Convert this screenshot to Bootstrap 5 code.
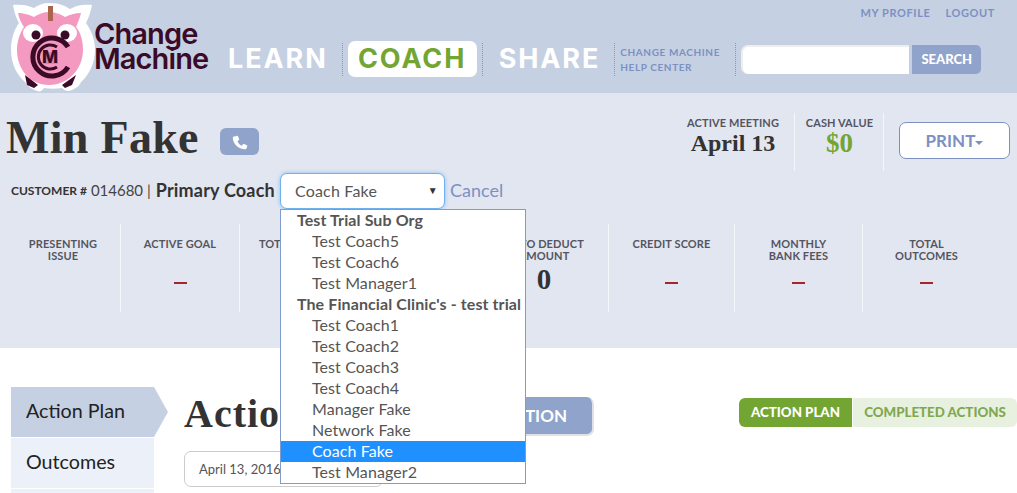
<!DOCTYPE html>
<html lang="en"><head><meta charset="utf-8"><title>Change Machine</title>
<link rel="stylesheet" href="https://cdn.jsdelivr.net/npm/bootstrap@5.3.0/dist/css/bootstrap.min.css">
<style>
html,body{height:493px;overflow:hidden}
body{font-family:"Lato","Liberation Sans",sans-serif;background:#fff;color:#3a3a3a}
.top-bar{background:#c5d0e3;height:93px;position:relative}
.logo-svg{width:100px;height:93px;margin-left:5px;flex:none;overflow:visible}
.logo-word{font-family:"Inter",sans-serif;font-weight:600;color:#3b0a26;font-size:29px;line-height:25px;letter-spacing:-.9px;margin-left:-11px;margin-top:21px;width:120px;flex:none}
.main-nav{margin-top:41px;height:36px;margin-left:14px}
.nav-word{font-family:"Inter",sans-serif;font-weight:700;font-size:27px;letter-spacing:1.9px;line-height:36px;color:#fff;text-decoration:none;display:block}
.nav-coach{background:#fff;color:#73a533;border-radius:7px;width:129px;text-align:center;margin:0 5px}
.dot-sep{border-left:1px dotted #8a97b8;height:33px;margin-top:2px}
.sep-wide{margin-left:14px}
.help-links{font-size:10px;font-weight:700;letter-spacing:.6px;line-height:15px;color:#7c90c2;padding:4px 0 0 5px;width:120px;white-space:nowrap}
.top-link{font-size:11px;font-weight:700;letter-spacing:.6px;color:#7c90c2;text-decoration:none}
.top-links{position:absolute;right:22px;top:5px;gap:15px}
.search-box{width:168px;height:29px;background:#fff;border:0;border-top:2px solid #eee;border-left:2px solid #eee;border-radius:7px 0 0 7px;margin:4px 3px 0 5px}
.search-btn{background:#8fa3cb;color:#fff;border:0;font-size:13px;font-weight:900;height:29px;width:69px;padding:0;border-radius:0 5px 5px 0;margin-top:4px}
.info-panel{background:#e2e6f1;height:255px}
.person-name{font-family:"Liberation Serif",serif;font-weight:700;font-size:46px;line-height:48px;color:#333;margin:0;letter-spacing:.3px}
.name-wrap{padding:21px 0 0 6px}
.phone-btn{width:39px;height:27px;background:#8fa3cb;border-radius:6px;margin-left:21px;margin-top:14px;border:0;padding:0}
.mini-label{font-size:11px;font-weight:700;color:#55555f;line-height:12px;letter-spacing:.1px}
.meet-val{font-family:"Liberation Serif",serif;font-weight:700;font-size:24px;line-height:28px;color:#333}
.cash-val{color:#73a533;font-size:27px}
.meet-group{padding:20px 7px 0 0}
.meet-col{text-align:center;height:58px;padding:4px 15px 0 0}
.meet-col.cash-col{border-left:1px solid #f4f6fa;border-right:1px solid #f4f6fa;padding:4px 9px 0 10px;width:90px}
.print-btn{width:111px;height:37px;background:#fff;border:1px solid #7c90c2;border-radius:7px;color:#7c90c2;font-weight:700;font-size:17px;margin:9px 0 0 15px;padding:0;line-height:33px}
.caret-mark{display:inline-block;border:4px solid transparent;border-top-color:#7c90c2;border-bottom:0;vertical-align:middle}
.cust-row{padding-left:11px;height:37px;margin-top:1px}
.cust-tag{font-size:12px;font-weight:700;color:#333}
.cust-num{font-size:15px;color:#444;margin-left:4px}
.coach-lab{font-size:18px;letter-spacing:.2px;font-weight:700;color:#333;margin-left:5px;margin-right:5px}
.coach-pick{width:165px;height:36px;background:#fff;border:1px solid #6fb1ef;border-radius:7px;box-shadow:0 0 4px #8ac0f2;padding:0 6px 0 14px;font-size:16px;letter-spacing:.2px;color:#555;position:relative}
.pick-tri{font-size:10px;color:#333}
.cancel-lnk{font-size:18px;color:#7c90c2;text-decoration:none;margin-left:5px}
.pick-list{position:absolute;left:-1px;top:35px;width:246px;background:#fff;border:1px solid #7f9ccc;margin:0;padding:0;list-style:none;z-index:5;font-size:16px;line-height:19px;letter-spacing:.1px;color:#555;white-space:nowrap}
.pick-list li{padding-left:31px;height:21px}
.pick-list li.grp{padding-left:16px;font-weight:700}
.pick-list li.sel{background:#1e90ff;color:#fff}
.stat-row{margin-top:15px;height:88px}
.stat-cell{border-left:1px solid #f4f6fa;text-align:center;padding-top:14px;flex:none}
.stat-cell:first-child{border-left:0;padding-left:6px}
.stat-cell.nudge{padding-right:1px}
.stat-dash{width:13px;height:2px;background:#a4262c;margin:20px auto 0}
.stat-dash.two{margin-top:32px}
.stat-zero{font-family:"Liberation Serif",serif;font-weight:700;font-size:29px;line-height:29px;color:#333;margin-top:3px}
.lower{position:relative;height:145px}
.side-col{margin-left:11px;margin-top:39px;width:143px;flex:none}
.side-item{height:50px;line-height:48px;padding-left:15px;background:#ecf0f8;color:#222;font-size:19.7px;margin-bottom:1px;position:relative}
.side-item.on{background:#c5d0e3}
.side-item.on::after{content:"";position:absolute;left:100%;top:0;border-left:14px solid #c5d0e3;border-top:25px solid transparent;border-bottom:25px solid transparent}
.side-item.stub{height:4px;margin:0}
.main-col{margin-left:30px;margin-top:44px;width:410px;flex:none}
.plan-title{font-family:"Liberation Serif",serif;font-weight:700;font-size:40px;line-height:44px;color:#333;margin:0;letter-spacing:1px;white-space:nowrap}
.add-btn{position:absolute;left:430px;top:49px;width:164px;height:39px;background:#8fa3cb;color:#fff;border:0;border-right:2px solid #dfe1e6;border-bottom:2px solid #dfe1e6;border-radius:7px;font-weight:700;font-size:17px;padding:0 25px 0 0;text-align:right}
.date-box{width:199px;height:36px;border:1px solid #ccc;border-radius:7px;margin-top:15px;padding:0 14px;line-height:34px;font-size:13px;color:#555}
.tab-set{position:absolute;left:739px;top:50px;height:29px;font-size:13.3px;font-weight:900;line-height:29px}
.tab-on{background:#73a533;color:#fff;width:113px;text-align:center;border-radius:6px 0 0 6px;margin-right:1px}
.tab-off{background:#e8f1e0;color:#7fa850;width:164px;text-align:center;border-radius:0 6px 6px 0}
</style></head><body>
<header class="top-bar d-flex">
<svg class="logo-svg" viewBox="5 0 100 93" role="img" aria-label="Change Machine piggy bank logo">
<path d="M49 3c-6 0-11 2-15 5-6-3-14-4-21-3 1 6 3 13 6 18-5 7-8 16-8 27 0 14 6 25 14 32 2 4 6 7 12 9 3 1 5 0 7-3 6 1 12 1 18 0 3 3 6 4 10 2 5-2 8-5 9-8 8-7 14-19 14-32 0-11-4-20-9-27 3-6 5-12 6-18-8-1-16 0-22 4-5-3-10-6-21-6z" fill="#fff"/>
<path d="M18 13c5 0 12 2 16 4 4-3 10-5 15-5s12 2 16 5c4-2 10-4 16-4-1 5-3 9-5 14 5 6 7 14 7 23 0 18-14 35-34 35S17 68 17 50c0-9 3-17 7-23-3-4-5-9-6-14z" fill="#f49ac1"/>
<path d="M25 75l13 10-4 3-7-3zM76 75l-14 10 3 3 7-3z" fill="#3b0a26"/>
<rect x="48" y="6" width="5" height="15" fill="#a8654a"/>
<ellipse cx="33" cy="33" rx="10" ry="9" fill="#fff"/><ellipse cx="67" cy="33" rx="10" ry="9" fill="#fff"/>
<circle cx="36" cy="35" r="4.500" fill="#3b0a26"/><circle cx="65" cy="35" r="4.500" fill="#3b0a26"/>
<path d="M68 47A19 19 0 1 0 68 67" fill="none" stroke="#3b0a26" stroke-width="5"/>
<path d="M57 47A12 12 0 1 0 57 67" fill="none" stroke="#3b0a26" stroke-width="3"/>
<rect x="43" y="52" width="15" height="12" fill="#c77a9c" opacity=".6"/>
<text x="50" y="63" text-anchor="middle" font-family="Inter,sans-serif" font-weight="800" font-size="17" fill="#3b0a26">M</text>
</svg>
<div class="logo-word">Change Machine</div>
<nav class="main-nav d-flex">
<a class="nav-word" href="#">LEARN</a>
<span class="dot-sep sep-wide"></span>
<a class="nav-word nav-coach" href="#">COACH</a>
<span class="dot-sep"></span>
<a class="nav-word ms-3" href="#">SHARE</a>
<span class="dot-sep sep-wide"></span>
<div class="help-links">CHANGE MACHINE<br>HELP CENTER</div>
<span class="dot-sep"></span>
<input class="search-box" type="text" aria-label="Search">
<button class="search-btn" type="button">SEARCH</button>
</nav>
<div class="top-links d-flex"><a class="top-link" href="#">MY PROFILE</a><a class="top-link" href="#">LOGOUT</a></div>
</header>
<section class="info-panel">
<div class="d-flex justify-content-between">
<div class="d-flex name-wrap"><h1 class="person-name">Min Fake</h1>
<button class="phone-btn" type="button" aria-label="Phone"><svg width="18" height="18" viewBox="0 0 24 24"><path d="M6.600 3.200l2.600-.9c.6-.2 1.100 0 1.400.6l1.600 3.600c.2.500.1 1-.3 1.400l-1.900 1.700c1 2.600 3 4.800 5.600 6l1.800-1.900c.4-.4.9-.5 1.400-.3l3.600 1.600c.6.3.8.8.6 1.400l-.9 2.600c-.3.8-1 1.300-1.800 1.300C11.100 20.300 3.700 13 3.700 4.900c0-.8.5-1.400 1.100-1.600z" fill="#fff"/></svg></button></div>
<div class="d-flex meet-group">
<div class="meet-col"><div class="mini-label">ACTIVE MEETING</div><div class="meet-val">April 13</div></div>
<div class="meet-col cash-col"><div class="mini-label">CASH VALUE</div><div class="meet-val cash-val">$0</div></div>
<button class="print-btn" type="button">PRINT<span class="caret-mark"></span></button>
</div></div>
<div class="cust-row d-flex align-items-center">
<span class="cust-tag">CUSTOMER #</span><span class="cust-num">014680 |</span><span class="coach-lab">Primary Coach</span>
<div class="coach-pick d-flex align-items-center justify-content-between"><span>Coach Fake</span><span class="pick-tri">▼</span>
<ul class="pick-list">
<li class="grp">Test Trial Sub Org</li><li>Test Coach5</li><li>Test Coach6</li><li>Test Manager1</li>
<li class="grp">The Financial Clinic's - test trial</li><li>Test Coach1</li><li>Test Coach2</li><li>Test Coach3</li><li>Test Coach4</li><li>Manager Fake</li><li>Network Fake</li><li class="sel">Coach Fake</li><li>Test Manager2</li>
</ul></div>
<a class="cancel-lnk" href="#">Cancel</a>
</div>
<div class="stat-row d-flex">
<div class="stat-cell mini-label" style="width:120px">PRESENTING<br>ISSUE</div>
<div class="stat-cell mini-label" style="width:119px">ACTIVE GOAL<div class="stat-dash two"></div></div>
<div class="stat-cell mini-label" style="width:121px">TOTAL INCOME<div class="stat-dash two"></div></div>
<div class="stat-cell mini-label" style="width:120px">SAVINGS<div class="stat-dash two"></div></div>
<div class="stat-cell mini-label nudge" style="width:128px">AUTO DEDUCT<br>AMOUNT<div class="stat-zero">0</div></div>
<div class="stat-cell mini-label" style="width:126px">CREDIT SCORE<div class="stat-dash two"></div></div>
<div class="stat-cell mini-label" style="width:128px">MONTHLY<br>BANK FEES<div class="stat-dash"></div></div>
<div class="stat-cell mini-label" style="width:128px">TOTAL<br>OUTCOMES<div class="stat-dash"></div></div>
</div>
</section>
<section class="lower d-flex">
<div class="side-col"><div class="side-item on">Action Plan</div><div class="side-item">Outcomes</div><div class="side-item stub"></div></div>
<div class="main-col"><h2 class="plan-title">Action Plan</h2><div class="date-box">April 13, 2016</div></div>
<button class="add-btn" type="button">ADD ACTION</button>
<div class="tab-set d-flex"><div class="tab-on">ACTION PLAN</div><div class="tab-off">COMPLETED ACTIONS</div></div>
</section>
<script src="https://cdn.jsdelivr.net/npm/bootstrap@5.3.0/dist/js/bootstrap.bundle.min.js"></script>
</body></html>
